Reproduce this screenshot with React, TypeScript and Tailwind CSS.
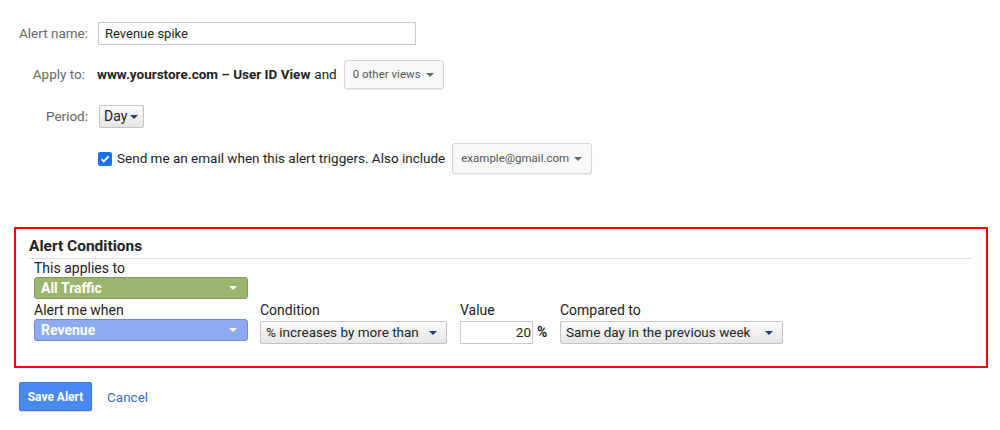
import type { ReactNode } from "react";

const font = { fontFamily: "Roboto, 'Liberation Sans', sans-serif" };

function Caret({ color = "#666" }: { color?: string }) {
  return <svg width="8" height="4" viewBox="0 0 8 4" className="shrink-0"><path d="M0 0h8L4 4z" fill={color} /></svg>;
}

function Label({ children }: { children: ReactNode }) {
  return <div className="w-[88px] shrink-0 text-right text-[#666]">{children}</div>;
}

function GraySelect({ text, width }: { text: string; width: string }) {
  return <div className={`flex h-[23px] ${width} items-center justify-between rounded-[2px] border border-[#c3c3c3] bg-gradient-to-b from-[#fbfbfb] to-[#e6e6e6] pl-[5px] pr-[9px] text-[13.5px] text-[#222]`}>
    <span>{text}</span><Caret color="#1d3f79" />
  </div>;
}

export default function App() {
  return <div style={font} className="h-[430px] w-[1000px] bg-white text-[13.5px] text-[#222]">
    <div className="pt-[22px]">
      <div className="flex items-center">
        <Label>Alert name:</Label>
        <input readOnly value="Revenue spike" className="ml-[10px] h-[23px] w-[318px] border border-[#c9c9c9] px-[6px] text-[13px] text-[#222] outline-none" />
      </div>

      <div className="mt-[15px] flex h-[29px] items-center">
        <div className="w-[85px] shrink-0 text-right text-[#666]">Apply to:</div>
        <span className="ml-[12px] font-bold">www.yourstore.com – User ID View</span>
        <span className="ml-[4px]">and</span>
        <div className="ml-[7px] flex h-[29px] w-[100px] items-center justify-between rounded-[3px] border border-[#d6d6d6] bg-[#f8f8f8] pl-[8px] pr-[9px] text-[11.5px] text-[#555] shadow-[0_1px_1px_rgba(0,0,0,0.08)]">
          <span>0 other views</span><Caret />
        </div>
      </div>

      <div className="mt-[16px] flex items-center">
        <Label>Period:</Label>
        <div className="ml-[11px] flex h-[23px] w-[45px] items-center justify-between rounded-[2px] border border-[#c3c3c3] bg-gradient-to-b from-[#fbfbfb] to-[#e6e6e6] pl-[4px] pr-[5px] text-[14px]">
          <span>Day</span><Caret color="#1d3f79" />
        </div>
      </div>

      <div className="mt-[15px] flex h-[31px] items-center">
        <div className="w-[98px] shrink-0" />
        <div className="flex h-[14px] w-[14px] items-center justify-center rounded-[2px] bg-[#1a73e8]">
          <svg width="10" height="10" viewBox="0 0 10 10"><path d="M1.5 5.2l2.3 2.3L8.6 2.3" stroke="#fff" strokeWidth="1.8" fill="none" /></svg>
        </div>
        <span className="ml-[5px]">Send me an email when this alert triggers. Also include</span>
        <div className="ml-[7px] flex h-[31px] w-[140px] items-center justify-between rounded-[3px] border border-[#d6d6d6] bg-[#f8f8f8] pl-[8px] pr-[9px] text-[11.5px] text-[#555] shadow-[0_1px_1px_rgba(0,0,0,0.08)]">
          <span>example@gmail.com</span><Caret />
        </div>
      </div>
    </div>

    <div className="ml-[14px] mt-[53px] h-[141px] w-[974px] border-2 border-[#ff0000] pl-[13px] pr-[14px] pt-[8px]">
      <div className="border-b border-[#e0e0e0] pb-[3px] text-[15.5px] font-bold leading-[18px]">Alert Conditions</div>
      <div className="pl-[5px]">
        <div className="text-[14px] leading-[18px]">This applies to</div>
        <div className="flex h-[22px] w-[214px] items-center justify-between rounded-[3px] border border-[#7f9b57] bg-[#9bb56f] pl-[6px] pr-[10px] text-[14px] font-bold text-white">
          <span>All Traffic</span><Caret color="#fff" />
        </div>
        <div className="mt-[2px] flex items-start text-[14px]">
          <div className="w-[226px] shrink-0">
            <div className="leading-[18px]">Alert me when</div>
            <div className="flex h-[22px] w-[214px] items-center justify-between rounded-[3px] border border-[#6d8bd8] bg-[#8eaaf3] pl-[6px] pr-[10px] font-bold text-white">
              <span>Revenue</span><Caret color="#fff" />
            </div>
          </div>
          <div className="w-[200px] shrink-0">
            <div className="leading-[18px]">Condition</div>
            <div className="mt-[2px]"><GraySelect text="% increases by more than" width="w-[187px]" /></div>
          </div>
          <div className="w-[100px] shrink-0">
            <div className="leading-[18px]">Value</div>
            <div className="mt-[2px] flex items-center">
              <div className="flex h-[23px] w-[73px] items-center justify-end border border-[#c9c9c9] pr-[1px] text-[13.5px]">20</div>
              <span className="ml-[4px] font-bold">%</span>
            </div>
          </div>
          <div>
            <div className="leading-[18px]">Compared to</div>
            <div className="mt-[2px]"><GraySelect text="Same day in the previous week" width="w-[223px]" /></div>
          </div>
        </div>
      </div>
    </div>

    <div className="ml-[19px] mt-[14px] flex items-center">
      <button className="h-[29px] w-[73px] rounded-[2px] border border-[#3b78e7] bg-[#4a89f3] text-[12px] font-bold text-white shadow-[0_1px_1px_rgba(0,0,0,0.15)]">Save Alert</button>
      <span className="ml-[15px] mt-[2px] text-[13.5px] text-[#3a69b8]">Cancel</span>
    </div>
  </div>;
}
